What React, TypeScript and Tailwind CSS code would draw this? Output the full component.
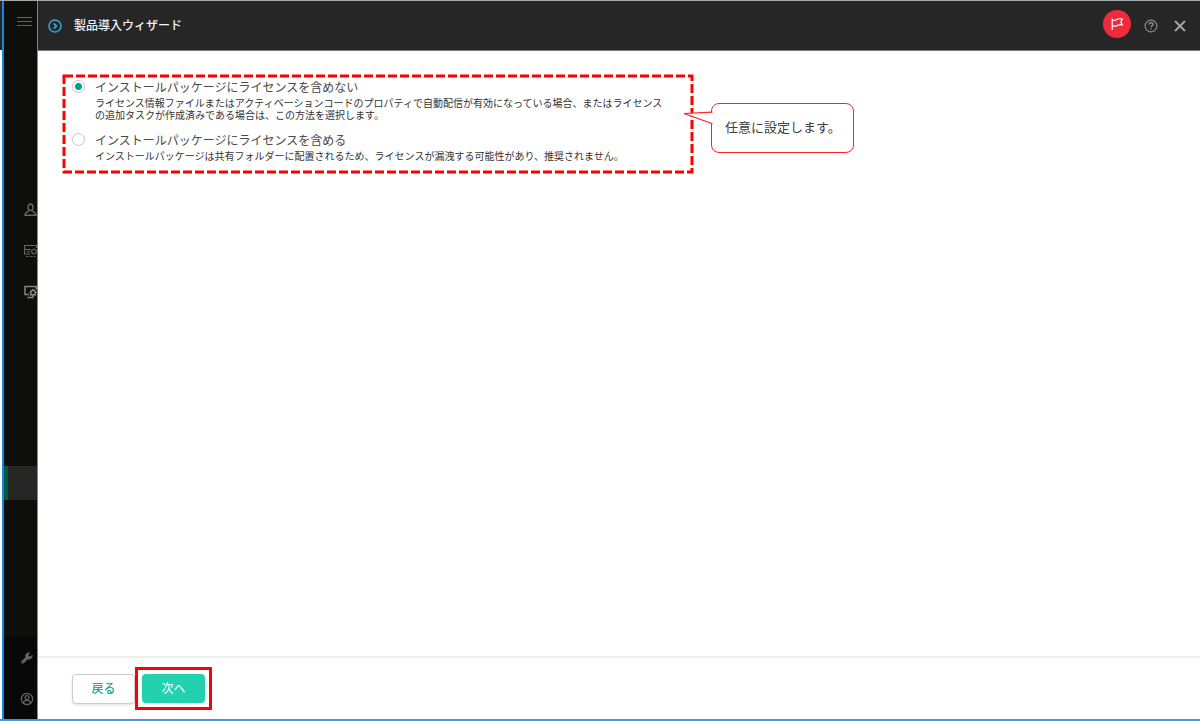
import { useState, type ReactNode } from "react";

const options = [
  {
    id: "exclude",
    title: "インストールパッケージにライセンスを含めない",
    description:
      "ライセンス情報ファイルまたはアクティベーションコードのプロパティで自動配信が有効になっている場合、またはライセンスの追加タスクが作成済みである場合は、この方法を選択します。",
  },
  {
    id: "include",
    title: "インストールパッケージにライセンスを含める",
    description:
      "インストールパッケージは共有フォルダーに配置されるため、ライセンスが漏洩する可能性があり、推奨されません。",
  },
];

const UserIcon = () => (
  <svg viewBox="0 0 14 14" className="w-[14px] h-[14px] shrink-0" fill="none" stroke="currentColor" strokeWidth="1.4">
    <ellipse cx="6.500" cy="4.200" rx="2.500" ry="3.200" />
    <path d="M4.800 7.400C4.400 9.200 1 8.800 1 12.300h11C12 8.800 8.600 9.200 8.200 7.400" />
  </svg>
);

const ServerIcon = () => (
  <svg viewBox="0 0 14 14" className="w-[14px] h-[14px] shrink-0" fill="none" stroke="currentColor" strokeWidth="1.1">
    <path d="M12.500 4V1.500H.6v8.500H6M.6 5.500H7M3 7.700h3" />
    <circle cx="10" cy="7.500" r="2.300" />
    <path d="M2 12.500h10" strokeWidth="0.800" strokeDasharray="3 1" />
  </svg>
);

const MonitorIcon = () => (
  <svg viewBox="0 0 14 14" className="w-[14px] h-[14px] shrink-0" fill="none" stroke="currentColor" strokeWidth="1.5">
    <path d="M12.3 4.500V1.5H1v8h4M3.500 12.500h6" />
    <circle cx="9" cy="7.500" r="2.300" />
    <path d="M9 4v1.200M9 9.800v2.200M5.500 7.500h1.200M11.300 7.500h1.400M7.300 9.500l-1 1.200M10.700 9.500l1 1.200" />
  </svg>
);

const WrenchIcon = () => (
  <svg viewBox="0 0 24 24" className="w-[12px] h-[12px] shrink-0" fill="currentColor">
    <path d="M22.7 5.4 18.9 9 15.4 8.300 14.900 5 18.500 1.200C15.500.300 12.300 1.100 10.300 3.500 8.700 5.400 8.300 8 9.100 10.300L1.200 18.200c-1.300 1.300-1.300 3.200-.1 4.500 1.300 1.200 3.300 1.200 4.500-.1l8-7.900c2.300.8 4.900.2 6.800-1.500 2.300-2 3.200-5 2.300-7.800zM3.500 21.500a1.200 1.200 0 1 1 0-2.400 1.200 1.200 0 0 1 0 2.400z" />
  </svg>
);

const AccountIcon = () => (
  <svg viewBox="0 0 14 14" className="w-[14px] h-[14px] shrink-0" fill="none" stroke="currentColor" strokeWidth="1.2">
    <circle cx="7" cy="7" r="5.600" />
    <circle cx="7" cy="5.600" r="1.900" />
    <path d="M3.600 11.300V10c.6-1.400 1.700-1.700 3.400-1.700s2.800.3 3.400 1.700v1.300" />
  </svg>
);

type SideButtonProps = {
  label: string;
  className: string;
  children: ReactNode;
};

const SideButton = ({ label, className, children }: SideButtonProps) => (
  <button type="button" aria-label={label} className={`flex items-center w-full h-[41px] ${className}`}>
    {children}
  </button>
);

const Sidebar = () => (
  <nav className="flex flex-col w-[34px] shrink-0 bg-[#0e0e0b] border-r border-[#85878a] overflow-hidden">
    <SideButton label="メニュー" className="pl-[13px] text-[#626262]">
      <svg viewBox="0 0 15 11" className="w-[15px] h-[11px]" stroke="currentColor" strokeWidth="1">
        <path d="M0 1.500h15M0 5.500h15M0 9.500h15" />
      </svg>
    </SideButton>
    <div className="mt-[147px] pl-5 text-[#686868]">
      <SideButton label="ユーザー" className="">
        <UserIcon />
      </SideButton>
      <SideButton label="サーバー" className="">
        <ServerIcon />
      </SideButton>
      <SideButton label="デバイス" className="text-[#858585]">
        <MonitorIcon />
      </SideButton>
    </div>
    <div className="mt-[154px] h-[34px] bg-[#262624] border-l-4 border-[#005a49]" />
    <div className="mt-auto bg-[#080808] text-[#666666]">
      <SideButton label="設定" className="pl-[17px]">
        <WrenchIcon />
      </SideButton>
      <SideButton label="アカウント" className="pl-4">
        <AccountIcon />
      </SideButton>
    </div>
  </nav>
);

const Header = () => (
  <header className="flex items-center h-[50px] shrink-0 bg-[#262626] border-b border-[#77797b] pl-[10px] pr-[14px]">
    <svg viewBox="0 0 14 14" className="w-[14px] h-[14px]" fill="none" stroke="#3ba3dc" strokeWidth="1.500">
      <circle cx="7" cy="7" r="6" />
      <path d="M5.700 4.300 8.400 7 5.700 9.700" strokeWidth="1.800" />
    </svg>
    <h1 className="ml-3 text-xs font-medium text-[#f4f4f4]">製品導入ウィザード</h1>
    <div className="ml-auto flex items-center">
      <button
        type="button"
        aria-label="通知"
        className="flex items-center justify-center mb-1 w-7 h-7 rounded-full bg-[#ef2a3c] text-white"
      >
        <svg viewBox="0 0 14 14" className="w-[14px] h-[14px]" fill="none" stroke="currentColor" strokeWidth="1.200">
          <path d="M2.200 1.500v11.500M2.200 3.200c3 .9 3.600-.2 5-.9 1.800-.8 3.600-.6 5.100-.2l-1.500 3 1.500 2.700c-2.400-.6-3.900.1-5.200.8-1.600.8-3 .6-4.900.1" />
        </svg>
      </button>
      <button type="button" aria-label="ヘルプ" className="ml-[13px] text-[#8d8d8d]">
        <svg viewBox="0 0 14 14" className="w-[14px] h-[14px]" fill="none" stroke="currentColor" strokeWidth="1.200">
          <circle cx="7" cy="7" r="5.900" />
          <path d="M5 5.600C5 4.300 5.900 3.700 7 3.700s2 .7 2 1.700c0 1.300-1.900 1.500-1.900 2.900M7.100 9.300v1.300" strokeWidth="1.400" />
        </svg>
      </button>
      <button type="button" aria-label="閉じる" className="ml-4 text-[#a3a3a3]">
        <svg viewBox="0 0 12 12" className="w-3 h-3" stroke="currentColor" strokeWidth="2">
          <path d="M1 1l10 10M11 1 1 11" />
        </svg>
      </button>
    </div>
  </header>
);

const Callout = () => (
  <div className="relative shrink-0 ml-[19px] mt-[27px] flex items-center h-[50px] pl-[13px] pr-3 rounded-lg border border-[#ff2020] bg-white">
    <svg viewBox="0 0 30 16" className="absolute -left-[29px] top-[5px] w-[30px] h-4">
      <path d="M29.500 3.200 1 4.500l28.500 10.300" fill="#ffffff" stroke="#ff2020" strokeWidth="1.200" />
    </svg>
    <p className="text-[13px] text-[#404040] whitespace-nowrap">任意に設定します。</p>
  </div>
);

const App = () => {
  const [selected, setSelected] = useState("exclude");

  return (
    <div className="flex h-screen bg-white border-t border-t-[#a4a9ae] border-b-2 border-b-[#3898e8] font-['Liberation_Sans','Noto_Sans_CJK_JP',sans-serif]">
      <div className="w-1 shrink-0 border-r-2 border-[#1685dc]">
        <div className="h-[49px] bg-[#262626]" />
      </div>
      <Sidebar />
      <div className="flex flex-col flex-1 min-w-0">
        <Header />
        <main className="flex-1 flex items-start pt-[25px] pl-[26px]">
          <div role="radiogroup" aria-label="ライセンス" className="relative w-[628px] pt-1 pb-[9px] pl-2 pr-5">
            <svg className="absolute inset-0 w-full h-full overflow-visible pointer-events-none" fill="none">
              <rect width="100%" height="100%" stroke="#ff0000" strokeWidth="3" strokeDasharray="9 3" />
            </svg>
            <div className="flex flex-col gap-[11px]">
              {options.map((option) => (
                <div key={option.id} className="flex items-start">
                  <input
                    type="radio"
                    id={option.id}
                    name="license"
                    checked={selected === option.id}
                    onChange={() => setSelected(option.id)}
                    aria-describedby={`${option.id}-description`}
                    className="appearance-none shrink-0 w-[13px] h-[13px] rounded-full border border-[#c4c4c4] bg-white checked:bg-[radial-gradient(circle,#00a385_3px,transparent_4px)]"
                  />
                  <div className="ml-[10px]">
                    <label htmlFor={option.id} className="block text-xs leading-4 text-[#4a4a4a]">
                      {option.title}
                    </label>
                    <p id={`${option.id}-description`} className="mt-[2px] text-[10px] leading-3 text-[#333333]">
                      {option.description}
                    </p>
                  </div>
                </div>
              ))}
            </div>
          </div>
          <Callout />
        </main>
        <footer className="flex items-center h-[63px] shrink-0 border-t-2 border-[#f0f0f0] pl-[34px]">
          <button
            type="button"
            className="w-[63px] h-[30px] rounded-sm border border-[#cccccc] bg-white text-xs font-medium text-[#22a88e] shadow-sm"
          >
            戻る
          </button>
          <div className="p-1 border-[3px] border-[#ff0000]">
            <button
              type="button"
              className="block w-[63px] h-[29px] rounded-sm bg-[#23d1ae] text-xs text-white"
            >
              次へ
            </button>
          </div>
        </footer>
      </div>
    </div>
  );
};

export default App;
